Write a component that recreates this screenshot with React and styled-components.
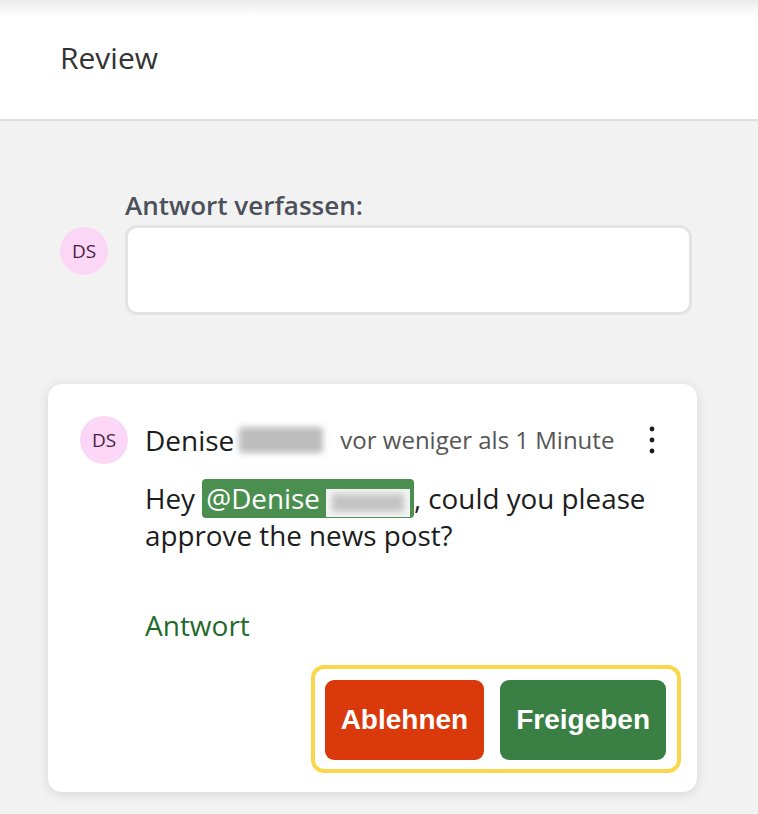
import React from 'react';
import styled, { createGlobalStyle } from 'styled-components';

const GlobalStyle = createGlobalStyle`
	body {
		margin: 0;
		background: #f2f2f2;
		font-family: "Open Sans", "Noto Sans", sans-serif;
	}
`;

const Page = styled.div`
	min-height: 814px;
	background: #f2f2f2;
`;

const Header = styled.header`
	height: 119px;
	display: flex;
	align-items: center;
	padding-left: 60px;
	background: linear-gradient(#ebebeb 0, #fafafa 12px, #fff 18px);
	border-bottom: 2px solid #dedede;
`;

const Title = styled.h1`
	margin: 0 0 4px;
	font-size: 30px;
	font-weight: 400;
	color: #333;
`;

const Compose = styled.section`
	display: grid;
	grid-template-columns: 48px 1fr;
	column-gap: 17px;
	padding: 69px 66px 0 60px;
`;

const Label = styled.div`
	grid-column: 2;
	font-size: 26px;
	font-weight: 600;
	line-height: 30px;
	color: #4b505a;
	margin-bottom: 5px;
`;

const Avatar = styled.div`
	width: 48px;
	height: 48px;
	border-radius: 50%;
	background: #fcd6f6;
	color: #4a1f43;
	font-size: 19px;
	display: flex;
	align-items: center;
	justify-content: center;
	margin-top: ${p => p.offset || 0}px;
`;

const Input = styled.div`
	height: 84px;
	border: 3px solid #e3e3e3;
	border-radius: 12px;
	background: #fff;
`;

const Card = styled.article`
	margin: 69px 61px 0 48px;
	padding: 32px 16px 19px 32px;
	background: #fff;
	border-radius: 14px;
	box-shadow: 0 2px 12px rgba(0, 0, 0, 0.12);
`;

const CardHead = styled.div`
	display: flex;
	align-items: center;
	gap: 17px;
`;

const Name = styled.span`
	font-size: 28px;
	line-height: 36px;
	color: #1c1c1c;
	display: flex;
	align-items: center;
`;

const Blur = styled.span`
	display: inline-block;
	vertical-align: middle;
	width: ${p => p.w}px;
	height: ${p => p.h}px;
	margin-left: ${p => p.ml || 0}px;
	background: ${p => p.bg || '#bdbdbd'};
	filter: blur(3px);
	border-radius: 2px;
`;

const Time = styled.span`
	font-size: 24px;
	line-height: 32px;
	color: #555;
`;

const Kebab = styled.svg`
	margin-left: auto;
	margin-right: 25px;
`;

const Body = styled.div`
	padding-left: 65px;
`;

const Message = styled.p`
	margin: 16px 0 0;
	font-size: 27.8px;
	line-height: 37px;
	color: #1c1c1c;
`;

const Mention = styled.span`
	background: #4a8f50;
	color: #fff;
	border-radius: 4px;
	padding: 0 4px 1px;
`;

const MentionBlur = styled.span`
	display: inline-flex;
	align-items: center;
	justify-content: center;
	vertical-align: -3px;
	width: 84px;
	height: 28px;
	margin-left: 6px;
	background: #f4f4f4;
`;

const ReplyLink = styled.a`
	display: block;
	margin-top: 53px;
	font-size: 28px;
	line-height: 36px;
	color: #1f6a2b;
	text-decoration: none;
`;

const Actions = styled.div`
	display: flex;
	justify-content: flex-end;
	margin-top: 22px;
`;

const ButtonGroup = styled.div`
	display: flex;
	gap: 16px;
	padding: 11px 11px 9px 10px;
	border: 4px solid #f9d94b;
	border-radius: 13px;
`;

const Button = styled.button`
	height: 80px;
	padding: 0 ${p => p.px}px;
	border: none;
	border-radius: 9px;
	background: ${p => p.bg};
	color: #fff;
	font-family: "Liberation Sans", Arial, sans-serif;
	font-weight: 700;
	font-size: 28px;
	cursor: pointer;
`;

const App = () => {
	return (
		<Page>
			<GlobalStyle />
			<Header>
				<Title>Review</Title>
			</Header>

			<Compose>
				<Label>Antwort verfassen:</Label>
				<Avatar offset={2}>DS</Avatar>
				<Input />
			</Compose>

			<Card>
				<CardHead>
					<Avatar>DS</Avatar>
					<Name>
						Denise
						<Blur w={84} h={26} ml={5} />
					</Name>
					<Time>vor weniger als 1 Minute</Time>
					<Kebab width="8" height="30" viewBox="0 0 8 30">
						<circle cx="4" cy="4" r="2.4" fill="#1c1c1c" />
						<circle cx="4" cy="15" r="2.4" fill="#1c1c1c" />
						<circle cx="4" cy="26" r="2.4" fill="#1c1c1c" />
					</Kebab>
				</CardHead>
				<Body>
					<Message>
						Hey{' '}
						<Mention>
							@Denise
							<MentionBlur>
								<Blur w={72} h={18} bg="#c4c4c4" />
							</MentionBlur>
						</Mention>
						, could you please approve the news post?
					</Message>
					<ReplyLink href="#">Antwort</ReplyLink>
				</Body>
				<Actions>
					<ButtonGroup>
						<Button bg="#da390c" px={16}>Ablehnen</Button>
						<Button bg="#3a8045" px={16}>Freigeben</Button>
					</ButtonGroup>
				</Actions>
			</Card>
		</Page>
	);
};

export default App;
